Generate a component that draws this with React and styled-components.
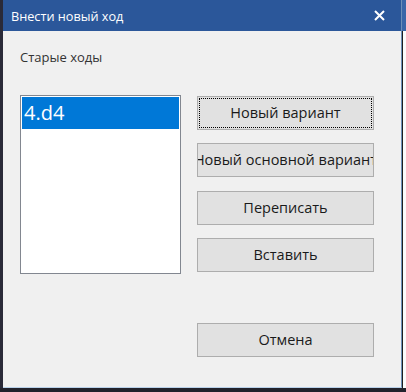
import React from "react";
import styled, { createGlobalStyle } from "styled-components";

const Global = createGlobalStyle`
  html, body { margin: 0; padding: 0; background: #23232f; }
  body { width: 406px; height: 392px; overflow: hidden; font-family: "Open Sans", "Noto Sans", sans-serif; }
`;

const Screen = styled.div`
  width: 406px;
  height: 392px;
  display: flex;
  flex-direction: column;
  background: #23232f;
`;

const Row = styled.div`
  display: flex;
  height: 388px;
`;

const Edge = styled.div`
  width: 3px;
  background: #2a2a38;
`;

const Window = styled.div`
  width: 398px;
  display: flex;
  flex-direction: column;
  background: #f0f0f0;
  border-right: 1px solid #6d8fb8;
  border-bottom: 1px solid #b9d1ea;
`;

const Outside = styled.div`
  flex: 1;
  display: flex;
  flex-direction: column;
  background: #fbfbfb;
`;

const OutsideTop = styled.div`
  height: 31px;
  background: #3a66a8;
`;

const OutsideRest = styled.div`
  flex: 1;
  border-left: 1px solid #1e1e1e;
  background: #fbfbfb;
`;

const TitleBar = styled.div`
  height: 31px;
  background: #2b579a;
  display: flex;
  align-items: center;
  justify-content: space-between;
  padding: 0 16px 0 8px;
  color: #ffffff;
  font-size: 12.7px;
`;

const CloseIcon = styled.svg`
  width: 11px;
  height: 11px;
  display: block;
`;

const Body = styled.div`
  flex: 1;
  display: flex;
  flex-direction: column;
  padding: 17px 0 0 17px;
`;

const Label = styled.div`
  font-size: 13px;
  color: #333333;
  height: 18px;
  line-height: 18px;
`;

const Content = styled.div`
  display: flex;
  gap: 16px;
  margin-top: 29px;
`;

const ListBox = styled.div`
  width: 157px;
  height: 175px;
  background: #ffffff;
  border: 1px solid #828790;
  padding: 1px;
`;

const ListItem = styled.div`
  height: 32px;
  background: ${(p) => (p.$selected ? "#0078d7" : "transparent")};
  color: ${(p) => (p.$selected ? "#ffffff" : "#000000")};
  font-size: 20px;
  line-height: 32px;
  padding-left: 2px;
`;

const Buttons = styled.div`
  display: flex;
  flex-direction: column;
  padding-top: 1px;
`;

const Button = styled.button`
  box-sizing: border-box;
  width: 177px;
  height: 34px;
  margin-top: ${(p) => p.$gap}px;
  background: #e1e1e1;
  border: 1px solid #adadad;
  font-family: "Open Sans", "Noto Sans", sans-serif;
  font-size: 14.5px;
  color: #1a1a1a;
  display: flex;
  align-items: center;
  justify-content: center;
  white-space: nowrap;
  overflow: hidden;
  padding: 0 0 1px;
  outline: ${(p) => (p.$focused ? "1px dotted #000" : "none")};
  outline-offset: -3px;
`;

const BottomEdge = styled.div`
  flex: 1;
  background: #22222c;
`;

export default function App() {
  return (
    <Screen>
      <Global />
      <Row>
        <Edge />
        <Window>
          <TitleBar>
            <span>Внести новый ход</span>
            <CloseIcon viewBox="0 0 11 11">
              <path d="M1 1 L10 10 M10 1 L1 10" stroke="#fff" strokeWidth="2" />
            </CloseIcon>
          </TitleBar>
          <Body>
            <Label>Старые ходы</Label>
            <Content>
              <ListBox>
                <ListItem $selected>4.d4</ListItem>
              </ListBox>
              <Buttons>
                <Button $gap={0} $focused>Новый вариант</Button>
                <Button $gap={13}>Новый основной вариант</Button>
                <Button $gap={14}>Переписать</Button>
                <Button $gap={13}>Вставить</Button>
                <Button $gap={51}>Отмена</Button>
              </Buttons>
            </Content>
          </Body>
        </Window>
        <Outside>
          <OutsideTop />
          <OutsideRest />
        </Outside>
      </Row>
      <BottomEdge />
    </Screen>
  );
}
